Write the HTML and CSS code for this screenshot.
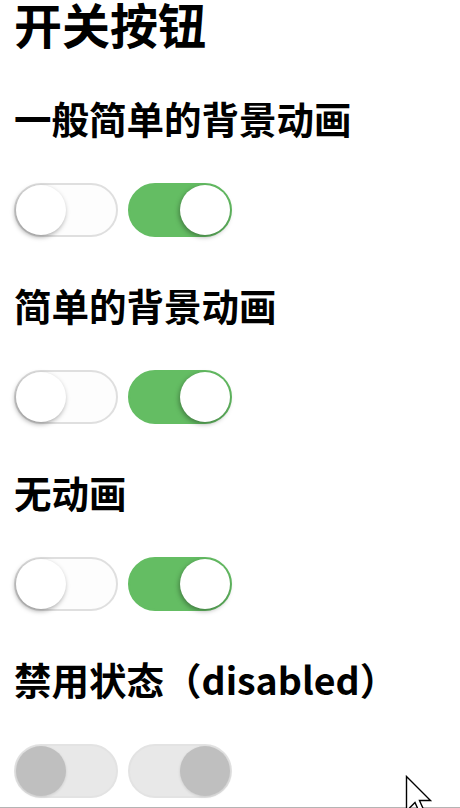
FILE: index.html
```html
<!DOCTYPE html>
<html lang="zh-CN">
<head>
<meta charset="utf-8">
<title>开关按钮</title>
<link rel="stylesheet" href="styles.css">
</head>
<body>
<main class="page">
  <h1 class="title">开关按钮</h1>

  <section class="group">
    <h2 class="group-title">一般简单的背景动画</h2>
    <div class="row">
      <span class="switch"></span>
      <span class="switch is-on"></span>
    </div>
  </section>

  <section class="group">
    <h2 class="group-title">简单的背景动画</h2>
    <div class="row">
      <span class="switch"></span>
      <span class="switch is-on"></span>
    </div>
  </section>

  <section class="group">
    <h2 class="group-title">无动画</h2>
    <div class="row">
      <span class="switch"></span>
      <span class="switch is-on"></span>
    </div>
  </section>

  <section class="group">
    <h2 class="group-title">禁用状态（disabled）</h2>
    <div class="row">
      <span class="switch is-disabled"></span>
      <span class="switch is-disabled is-on"></span>
    </div>
  </section>
</main>
<div class="edge"></div>
<svg class="cursor" width="30" height="34" viewBox="0 0 30 34" aria-hidden="true">
  <path d="M1.5 1.5 L1.5 36 L10 27.5 L16.5 42 L21 40 L14.5 25.5 L25.5 25.5 Z" fill="#fff" stroke="#000" stroke-width="1.4" stroke-linejoin="miter"/>
</svg>
</body>
</html>
```

FILE: styles.css
```css
html, body {
  margin: 0;
  padding: 0;
  height: 808px;
  overflow: hidden;
  background: #fff;
}

body {
  position: relative;
  font-family: "Noto Sans CJK SC", "Noto Sans", sans-serif;
  color: #000;
}

.page {
  padding: 0 0 0 14px;
}

.title {
  margin: 0 0 54px;
  font-size: 48px;
  line-height: 46px;
  font-weight: 700;
}

.group {
  margin-top: 0;
}

.group + .group {
  margin-top: 50px;
}

.group-title {
  margin: 0 0 47px;
  font-size: 37.5px;
  line-height: 36px;
  font-weight: 700;
}

.row {
  display: flex;
  gap: 10px;
  height: 54px;
}

.switch {
  position: relative;
  box-sizing: border-box;
  width: 104px;
  height: 54px;
  border: 2px solid #dfdfdf;
  border-radius: 27px;
  background: #fdfdfd;
}

.switch::before {
  content: "";
  position: absolute;
  top: 0;
  left: 0;
  width: 50px;
  height: 50px;
  border-radius: 50%;
  background: #fff;
  box-shadow: -1px 2px 5px rgba(0, 0, 0, 0.35);
}

.switch.is-on {
  border-color: #64bd63;
  background: #64bd63;
}

.switch.is-on::before {
  left: 50px;
}

.switch.is-disabled {
  border-color: #e3e3e3;
  background: #e8e8e8;
}

.switch.is-disabled::before {
  background: #bfbfbf;
  box-shadow: 0 1px 3px rgba(0, 0, 0, 0.12);
}

.edge {
  margin-top: 9px;
  height: 1px;
  background: #b4b4b4;
}

.cursor {
  position: absolute;
  left: 405px;
  top: 775px;
}
```
